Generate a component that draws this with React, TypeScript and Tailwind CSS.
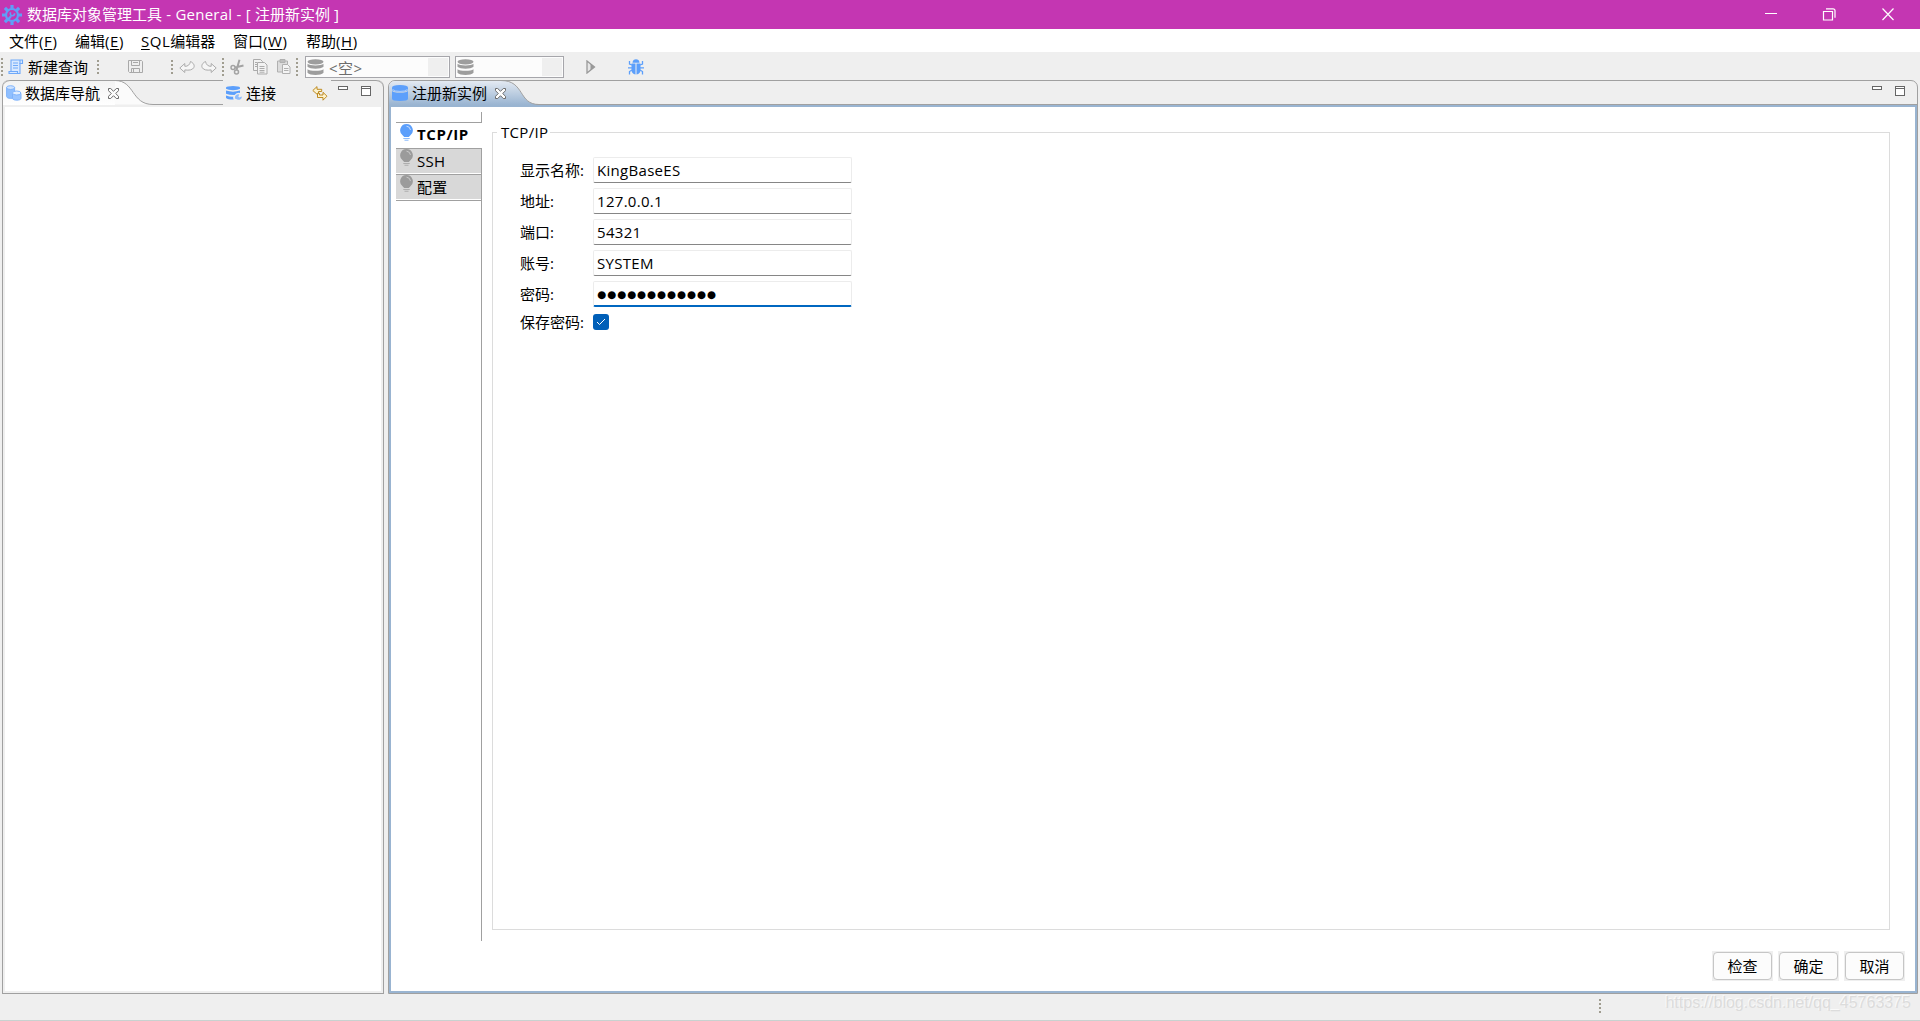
import { ReactNode } from "react";
import clsx from "clsx";

const menus = [
  { label: "文件", hotkey: "F", className: "w-[66px]" },
  { label: "编辑", hotkey: "E", className: "w-[66px]" },
  { label: "SQL编辑器", className: "w-[92px]" },
  { label: "窗口", hotkey: "W", className: "w-[73px]" },
  { label: "帮助", hotkey: "H", className: "w-[60px]" },
];

const fields = [
  { label: "显示名称:", value: "KingBaseES" },
  { label: "地址:", value: "127.0.0.1" },
  { label: "端口:", value: "54321" },
  { label: "账号:", value: "SYSTEM" },
  { label: "密码:", value: "●●●●●●●●●●●●", password: true },
];

function GearIcon() {
  return (
    <svg width="20" height="20" viewBox="0 0 20 20" fill="none" stroke="#5f9ff8">
      <circle cx="10" cy="10" r="6" strokeWidth="2.200" />
      <path
        d="M10 0v4M10 16v4M0 10h4M16 10h4M2.900 2.900l2.900 2.900M14.200 14.200l2.900 2.900M17.100 2.900l-2.900 2.900M5.800 14.200l-2.900 2.900"
        strokeWidth="3.200"
      />
      <path d="M5.500 15l3.700-4" strokeWidth="2.200" />
      <path d="M8.500 7.300c-.6 2.200.3 3.500 2 3.400 1.400-.1 2.200-1 2.100-2.400" strokeWidth="1.600" />
    </svg>
  );
}

function ScrollIcon() {
  return (
    <svg width="16" height="16" viewBox="0 0 16 16" fill="none">
      <path d="M3 1h11.500v3H12v11H1v-2.500h2z" fill="#d9e9ff" />
      <path d="M3 12V1h11.500v3.500h-2.500V14.500H1v-2h8.500v2" stroke="#6fa9f9" strokeWidth="1.100" />
      <path d="M12 1v4M5 4h5M5 6.500h5M5 9h5" stroke="#6fa9f9" strokeWidth="1.100" />
    </svg>
  );
}

function SaveIcon() {
  return (
    <svg width="15" height="13" viewBox="0 0 15 13" fill="none" stroke="#a9a9a9">
      <path d="M.5.5h13l1 1v11H1.500l-1-1z" />
      <path d="M3.500.5v5h8v-5M3.500 12.500v-4h8v4M5.500 9v3M5 2.500h5" />
    </svg>
  );
}

function UndoIcon({ flip }: { flip?: boolean }) {
  return (
    <svg width="16" height="12" viewBox="0 0 16 12" className={clsx(flip && "-scale-x-100")}>
      <path
        d="M.8 7l5-4.500v2.800c3 .2 5-1.500 5.700-4.800 2.800 1.300 4.300 3.600 3.400 5.900C13.700 9 10 9.600 5.800 8.900v2.600z"
        fill="#f6f6f6"
        stroke="#ababab"
      />
    </svg>
  );
}

function CutIcon() {
  return (
    <svg width="14" height="16" viewBox="0 0 14 16" fill="none" stroke="#a3a3a3">
      <circle cx="3" cy="8.500" r="2" strokeWidth="1.500" />
      <circle cx="6.500" cy="13" r="2" strokeWidth="1.500" />
      <path d="M5 8.500l8.500-2M6.500 11L9.500.8" strokeWidth="2" />
    </svg>
  );
}

function CopyIcon() {
  return (
    <svg width="15" height="16" viewBox="0 0 15 16" fill="#f2f2f2" stroke="#ababab">
      <path d="M.5.5h7l2 2v9h-9z" />
      <path d="M4.500 3.500h7l2.500 2.500v9h-9.500z" />
      <path d="M6.500 7.500h5M6.500 9.500h5M6.500 11.500h5M6.500 13.200h5M2 3.500h2M2 5.500h2M2 7.500h2" />
    </svg>
  );
}

function PasteIcon() {
  return (
    <svg width="14" height="15" viewBox="0 0 14 15" stroke="#b0b0b0">
      <path d="M.5 2h10v11H.5z" fill="#dcdcdc" />
      <path d="M3 .5h5v3H3z" fill="#bdbdbd" />
      <path d="M5.500 5.500h5l2.500 2.500v6.500h-7.500z" fill="#f4f4f4" />
      <path d="M7 9.500h4.500M7 11.500h4.500" />
    </svg>
  );
}

function DatabaseIcon({ color }: { color: string }) {
  return (
    <svg width="17" height="17" viewBox="0 0 17 17" fill={color}>
      <ellipse cx="8.500" cy="2.800" rx="8" ry="2.600" />
      <path d="M.5 4.800c2.500 2.100 13.500 2.100 16 0v3c-2.500 2.500-13.500 2.500-16 0z" />
      <path d="M.5 10.200c2.500 2.100 13.500 2.100 16 0v3.600c-2.500 3-13.500 3-16 0z" />
    </svg>
  );
}

function InstanceIcon() {
  return (
    <svg width="16" height="16" viewBox="0 0 16 16" fill="#5c9ffb">
      <path d="M0 2.500Q0 0 8 0t8 2.500v2Q16 6.500 8 6.500T0 4.500z" />
      <path d="M0 5.800Q1 7.800 8 7.800t8-2v8Q16 16 8 16t-8-2.200z" />
      <path d="M.5 4.500Q3 6.400 8 6.400t7.500-1.900" stroke="#a9ccff" fill="none" />
    </svg>
  );
}

function NavigatorIcon() {
  return (
    <svg width="16" height="16" viewBox="0 0 16 16" stroke="#7fb3fb">
      <path d="M.6 2.500v9c0 2.500 8 2.500 8 0v-9z" fill="#8fbfff" />
      <ellipse cx="4.600" cy="2.600" rx="4" ry="1.900" fill="#cfe3ff" />
      <path d="M6.500 8.500v4.800c0 2.500 8.500 2.500 8.500 0V8.500z" fill="#9cc6ff" />
      <ellipse cx="10.700" cy="8" rx="4.200" ry="2" fill="#e3efff" />
    </svg>
  );
}

function ConnectIcon() {
  return (
    <svg width="16" height="15" viewBox="0 0 16 15" fill="#5c9ffb">
      <path d="M0 1.500Q1 0 7 0t7 1.500v1.300Q12 4.200 7 4.200T0 2.800z" />
      <path d="M0 4.500q7 2.300 14 0V7q-3-.8-5.500 2Q3 9 0 7.700z" />
      <path d="M0 9.400q4 1.400 7.200 1.200-.4 1.600.5 2.900Q2 13.600 0 12z" />
      <path d="M9 12.800c-.7-3.300 2-5.300 4.300-4.400l-1 2.100.9.900 2.600-.9c.4 2.800-3.600 4.600-6 2.300z" fill="#8dbbfc" />
    </svg>
  );
}

function LinkArrowsIcon() {
  return (
    <svg width="16" height="15" viewBox="0 0 16 15" fill="#fdf3cf" stroke="#b8800f" strokeWidth=".9">
      <path d="M.8 4.500L5 .6v2.700h4.700v2.200H6.500V8L5 8.200z" />
      <path d="M15 10.200L11 6.300V9H7.500V7.300h-2v4.200H11v2.700z" />
    </svg>
  );
}

function BulbIcon({ active }: { active?: boolean }) {
  return (
    <svg width="13" height="17" viewBox="0 0 13 17" fill={active ? "#5c9ffb" : "#9b9b9b"}>
      <path d="M6.500 0a6.300 6.300 0 0 1 3.700 11.400L8.800 13H4.200l-1.400-1.600A6.300 6.300 0 0 1 6.500 0z" />
      <path d="M3.300 14h6.400v1H3.300zM4.500 15.800h4v1h-4z" opacity=".7" />
      <path d="M6.500 2.200Q10 2.400 10.500 6" fill="none" stroke={active ? "#c7ddff" : "#c9c9c9"} />
    </svg>
  );
}

function BugIcon() {
  return (
    <svg width="16" height="16" viewBox="0 0 16 16" fill="#5c9ffb">
      <path d="M4.500 3.800C4.500-.8 11.500-.8 11.500 3.800z" />
      <path d="M3.500 4.500h4v11C5 15 3.500 13.500 3.500 11zM8.500 4.500h4V11c0 2.500-1.500 4-4 4.500z" />
      <path d="M1.500 2v3l2.500 1M14.500 2v3L12 6M0 8.800h4M12 8.800h4M4 11l-2.500 1.500V15.500M12 11l2.500 1.500V15.500" stroke="#5c9ffb" strokeWidth="1.300" fill="none" />
    </svg>
  );
}

function CloseTabIcon() {
  return (
    <svg width="11" height="11" viewBox="0 0 11 11" fill="#fdfdfd" stroke="#6b6b6b">
      <path d="M.5.5h2.200l2.800 2.800L8.300.5h2.200v2.200L7.700 5.500l2.800 2.800v2.200H8.300L5.500 7.700l-2.800 2.800H.5V8.300l2.800-2.800L.5 2.700z" />
    </svg>
  );
}

function Grip({ className, dots = 4 }: { className?: string; dots?: number }) {
  return (
    <div className={clsx("flex w-0.5 shrink-0 flex-col gap-[2px]", className)}>
      {Array.from({ length: dots }, (_, i) => (
        <span key={i} className="h-[2px] w-[2px] bg-[#a09d90]" />
      ))}
    </div>
  );
}

// minimize / maximize buttons of a view stack
function ViewButtons({ className }: { className?: string }) {
  return (
    <div className={clsx("flex items-start", className)}>
      <span className="h-1 w-2.5 border border-[#666] bg-white" />
      <span className="ml-[13px] h-2.5 w-2.5 border border-[#666] bg-white">
        <span className="mt-px block h-px bg-[#666]" />
      </span>
    </div>
  );
}

function Combo({ className, children }: { className: string; children?: ReactNode }) {
  return (
    <div className={clsx("flex h-[22px] shrink-0 items-center border border-[#a6a6ab] bg-[#fcfcfc] pr-px pl-px", className)}>
      <span className="pt-[2px]"><DatabaseIcon color="#9d9d9d" /></span>
      <span className="mt-[3px] ml-[5px] flex-1 leading-5 tracking-[0.5px] text-[#6d6d6d]">{children}</span>
      <span className="h-[18px] w-5 bg-[#efefef]" />
    </div>
  );
}

function TitleBar() {
  return (
    <header className="flex h-[29px] shrink-0 items-center bg-[#c436b2] pl-[2px] text-white">
      <GearIcon />
      <span className="ml-[5px] flex-1 pb-[2px] whitespace-pre">
        数据库对象管理工具<span className="tracking-[0.25px]"> - General - [ </span>注册新实例 ]
      </span>
      <svg width="130" height="13" viewBox="0 0 130 13" fill="none" stroke="#fff" className="mr-[26px]">
        <path d="M1 5.500h12" />
        <path d="M59.500 3.500h9v8.500h-9zM62 .8h7q2 0 2 2v7" strokeWidth="1.200" />
        <path d="M118.500.5l11 11.500M129.500.5l-11 11.500" strokeWidth="1.200" />
      </svg>
    </header>
  );
}

function MenuBar() {
  return (
    <nav className="flex h-[23px] shrink-0 items-center bg-white pl-[9px]">
      {menus.map((m) => (
        <span key={m.label} className={clsx("whitespace-nowrap", m.className)}>
          {m.hotkey ? (
            <>
              {m.label}
              <span className="tracking-[0.6px]">(<u className="underline-offset-2">{m.hotkey}</u>)</span>
            </>
          ) : (
            <>
              <span className="tracking-[0.5px]"><u className="underline-offset-2">S</u>QL</span>编辑器
            </>
          )}
        </span>
      ))}
    </nav>
  );
}

function Toolbar() {
  return (
    <div className="flex h-7 shrink-0 items-center pt-px pl-px">
      <Grip dots={5} />
      <span className="ml-[5px]"><ScrollIcon /></span>
      <span className="ml-1 w-[69px] whitespace-nowrap">新建查询</span>
      <Grip />
      <span className="ml-[29px]"><SaveIcon /></span>
      <Grip className="ml-7" />
      <span className="ml-[6px]"><UndoIcon /></span>
      <span className="ml-[6px]"><UndoIcon flip /></span>
      <Grip className="ml-[5px]" dots={5} />
      <span className="ml-[6px]"><CutIcon /></span>
      <span className="ml-[9px]"><CopyIcon /></span>
      <span className="ml-[9px]"><PasteIcon /></span>
      <Grip className="ml-[5px]" dots={5} />
      <Combo className="ml-[7px] w-[145px]">&lt;空&gt;</Combo>
      <Combo className="ml-[5px] w-[109px]" />
      <svg width="10" height="14" viewBox="0 0 10 14" className="ml-[22px]">
        <path d="M1 1l7.500 6L1 13z" fill="#e6e6e6" stroke="#999" strokeWidth="1.300" />
        <path d="M4.500 3.500L8.500 7l-4 3.500z" fill="#999" />
      </svg>
      <span className="ml-[32px]"><BugIcon /></span>
    </div>
  );
}

function NavigatorView() {
  return (
    <aside className="flex w-[382px] shrink-0 flex-col rounded-t-[7px] border-x border-b border-[#a0a0a0] pb-[2px]">
      <div className="flex h-[27px] shrink-0">
        <div className="flex h-[25px] w-[112px] items-center rounded-tl-[7px] border-t border-[#a0a0a0] bg-gradient-to-b from-[#f3f3f3] to-white pl-[3px]">
          <NavigatorIcon />
          <span className="ml-[3px] w-[83px] whitespace-nowrap">数据库导航</span>
        </div>
        <svg width="108" height="25" viewBox="0 0 108 25" fill="none">
          <path d="M0 0C20 0 16 24.500 38 24.500H0z" fill="#fbfbfb" />
          <path d="M0 .5h108M0 .5C20 .5 16 24.500 38 24.500H108" stroke="#a0a0a0" />
        </svg>
        <div className="-ml-[115px] w-[115px] pt-2"><CloseTabIcon /></div>
        <span className="ml-[3px] pt-[6px]"><ConnectIcon /></span>
        <span className="ml-1 w-[66px] pt-[2px] leading-[22px]">连接</span>
        <span className="pt-[6px]"><LinkArrowsIcon /></span>
        <div className="ml-[3px] flex h-[25px] flex-1 justify-end rounded-tr-[7px] border-t border-[#a0a0a0] pt-[5px] pr-[12px]">
          <ViewButtons />
        </div>
      </div>
      <div className="mr-[2px] ml-[2px] flex-1 bg-white" />
    </aside>
  );
}

function SideTab({ label, active }: { label: string; active?: boolean }) {
  return (
    <div
      className={clsx(
        "flex h-[26px] w-[86px] items-start border-b border-[#a0a0a0] pl-1",
        active ? "font-bold" : "border-r bg-[#d8d8d8] shadow-[inset_0_-1px_#fff]"
      )}
    >
      <span className={clsx(active && "pt-px")}><BulbIcon active={active} /></span>
      <span className={clsx("ml-1", active ? "leading-[22px] tracking-[0.6px]" : "leading-6 tracking-[0.3px]")}>
        {label}
      </span>
    </div>
  );
}

function ConnectionForm() {
  return (
    <fieldset className="relative mt-[25px] h-[798px] w-[1398px] border border-[#dcdcdc] pt-6 pl-[27px]">
      <legend className="absolute -top-3 left-1 bg-white pr-0.5 pl-1 leading-[22px] tracking-[0.3px]">TCP/IP</legend>
      <div className="flex flex-col gap-[5px]">
        {fields.map((f) => (
          <label key={f.label} className="flex h-[26px] items-center">
            <span className="w-[73px] whitespace-nowrap">{f.label}</span>
            <span
              className={clsx(
                "flex h-[26px] w-[259px] items-center rounded-[2px] border border-[#ececec] bg-white pl-[3px]",
                f.password
                  ? "border-b-2 border-b-[#0067c0] pt-px pl-1 font-['DejaVu_Sans'] text-[10.4px] tracking-[0.9px]"
                  : "border-b-[#868686] tracking-[0.3px]"
              )}
            >
              {f.value}
            </span>
          </label>
        ))}
      </div>
      <label className="mt-[3px] flex h-6 items-center">
        <span className="w-[73px]">保存密码:</span>
        <span className="flex h-4 w-4 items-center justify-center rounded-[3px] bg-[#005fb8]">
          <svg width="10" height="8" viewBox="0 0 10 8" fill="none" stroke="#fff">
            <path d="M1 4l2.500 2.500L9 1" />
          </svg>
        </span>
      </label>
    </fieldset>
  );
}

function EditorView() {
  return (
    <main className="ml-1 flex w-[1530px] shrink-0 flex-col rounded-t-[7px] border border-[#a0a0a0]">
      <div className="flex h-6 shrink-0 border-b border-[#a0a0a0]">
        <div className="-mb-px flex w-[112px] items-center rounded-tl-[6px] bg-gradient-to-b from-[#e4eaf2] to-[#99b4d1] pl-[3px]">
          <InstanceIcon />
          <span className="ml-1 whitespace-nowrap">注册新实例</span>
        </div>
        <svg width="38" height="24" viewBox="0 0 38 24">
          <defs>
            <linearGradient id="tab" x1="0" y1="0" x2="0" y2="1">
              <stop offset="0" stopColor="#e4eaf2" />
              <stop offset="1" stopColor="#99b4d1" />
            </linearGradient>
          </defs>
          <path d="M0-.5C24-.5 17 23.500 38 23.500V24H0z" fill="url(#tab)" />
          <path d="M0-.5C24-.5 17 23.500 38 23.500" fill="none" stroke="#a0a0a0" />
        </svg>
        <div className="-ml-[44px] flex-1 pt-[7px]"><CloseTabIcon /></div>
        <ViewButtons className="mr-3 pt-[5px]" />
      </div>
      <div className="flex flex-1 flex-col border-2 border-[#99b4d1] bg-white">
        <div className="flex h-[834px] pl-[5px]">
          <div className="flex w-[86px] flex-col pt-[5px]">
            <div className="h-[11px] border-r border-b border-[#a0a0a0]" />
            <SideTab label="TCP/IP" active />
            <SideTab label="SSH" />
            <SideTab label="配置" />
            <div className="flex-1 border-r border-[#a0a0a0]" />
          </div>
          <div className="pl-[10px]"><ConnectionForm /></div>
        </div>
        <div className="mt-[10px] flex justify-end gap-[5px] pr-[10px]">
          {["检查", "确定", "取消"].map((text) => (
            <div key={text} className="h-[30px] w-[61px] bg-[#efefef] p-px">
              <button className="h-full w-full rounded-[4px] border border-[#c6c6c6] bg-[#fcfcfc]">{text}</button>
            </div>
          ))}
        </div>
      </div>
    </main>
  );
}

export default function App() {
  return (
    <div className="flex h-[1021px] w-[1920px] flex-col overflow-hidden bg-[#efefef] font-['Open_Sans','Noto_Sans_CJK_SC',sans-serif] text-[15px] leading-5 text-black">
      <TitleBar />
      <MenuBar />
      <Toolbar />
      <div className="flex h-[914px] shrink-0 pl-[2px]">
        <NavigatorView />
        <EditorView />
      </div>
      <footer className="flex flex-1 items-start justify-end border-b border-[#c8d2d0] pr-[9px]">
        <Grip className="mt-[5px] mr-16" />
        <span className="-mt-px font-['Liberation_Sans'] text-[16px] text-[#dcdcdc] [text-shadow:-1px_-1px_#fafafa]">
          https://blog.csdn.net/qq_45763375
        </span>
      </footer>
    </div>
  );
}
